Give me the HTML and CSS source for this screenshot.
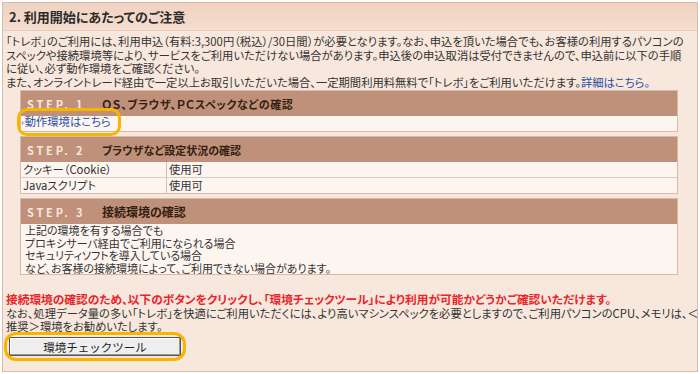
FILE: index.html
```html
<!DOCTYPE html>
<html lang="ja">
<head>
<meta charset="utf-8">
<link rel="stylesheet" href="styles.css">
</head>
<body>
<div class="box">
  <div class="box-head">2. 利用開始にあたってのご注意</div>
  <div class="box-body">
    <p class="intro">「トレボ」のご利用には、利用申込（有料:3,300円（税込）/30日間）が必要となります。なお、申込を頂いた場合でも、お客様の利用するパソコンの<br>スペックや接続環境等により、サービスをご利用いただけない場合があります。申込後の申込取消は受付できませんので、申込前に以下の手順<br>に従い、必ず動作環境をご確認ください。<br>また、オンライントレード経由で一定以上お取引いただいた場合、一定期間利用料無料で「トレボ」をご利用いただけます。<a class="link" href="#">詳細はこちら。</a></p>

    <div class="steps">
      <div class="step">
        <div class="step-head"><span class="step-num">STEP. 1</span><span class="step-title wide">ＯＳ、ブラウザ、ＰＣスペックなどの確認</span></div>
        <div class="step-row"><a class="link arrow hl" href="#">動作環境はこちら</a></div>
      </div>
      <div class="step">
        <div class="step-head"><span class="step-num">STEP. 2</span><span class="step-title">ブラウザなど設定状況の確認</span></div>
        <div class="step-table">
          <div class="cell key">クッキー（Cookie）</div><div class="cell">使用可</div>
          <div class="cell key">Javaスクリプト</div><div class="cell">使用可</div>
        </div>
      </div>
      <div class="step">
        <div class="step-head"><span class="step-num">STEP. 3</span><span class="step-title big">接続環境の確認</span></div>
        <div class="step-text">上記の環境を有する場合でも<br>プロキシサーバ経由でご利用になられる場合<br>セキュリティソフトを導入している場合<br>など、お客様の接続環境によって、ご利用できない場合があります。</div>
      </div>
    </div>

    <p class="alert">接続環境の確認のため、以下のボタンをクリックし、「環境チェックツール」により利用が可能かどうかご確認いただけます。</p>
    <p class="note">なお、処理データ量の多い「トレボ」を快適にご利用いただくには、より高いマシンスペックを必要としますので、ご利用パソコンのCPU、メモリは、＜<br>推奨＞環境をお勧めいたします。</p>
    <div class="btn-wrap hl"><button class="btn" type="button">環境チェックツール</button></div>
  </div>
</div>
</body>
</html>
```

FILE: styles.css
```css
html, body {
  margin: 0;
  padding: 0;
  background: #ffffff;
}
body {
  font-family: "Noto Sans CJK JP", "Noto Sans", sans-serif;
  font-size: 11.3px;
  color: #333333;
  font-feature-settings: "palt";
}
.box {
  margin: 2px 2px 0 2px;
  height: 370px;
  box-sizing: border-box;
  border: 1px solid #d6bcab;
  background: #f7e7dc;
  overflow: hidden;
}
.box-head {
  height: 27px;
  line-height: 27px;
  padding-left: 6px;
  font-size: 13px;
  font-weight: bold;
  color: #2b2b2b;
  background: linear-gradient(#f0d2c0, #f5ddd0);
  border-bottom: 1px solid #e6c9b7;
}
.box-body {
  padding: 4px 4px 0 3px;
}
.intro {
  margin: 0;
  line-height: 13.5px;
  white-space: nowrap;
}
.link {
  color: #2a4fa3;
  text-decoration: none;
}
.steps {
  margin: 1px 15px 0 14px;
}
.step {
  border: 1px solid #d9b9a7;
  background: #fdf5ef;
  margin-bottom: 4px;
}
.step-head {
  height: 25px;
  display: flex;
  align-items: center;
  background: #bf917a;
  padding-left: 6px;
}
.step-num {
  width: 75px;
  color: #f8e6d8;
  font-size: 11px;
  font-weight: bold;
  letter-spacing: 2.8px;
}
.step-title {
  color: #33200f;
  font-size: 11px;
  font-weight: bold;
}
.step-title.wide {
  letter-spacing: 0.6px;
}
.step-title.big {
  font-size: 12px;
}
.step-row {
  height: 15px;
  line-height: 15px;
}
.arrow::before {
  content: "›";
  font-size: 9px;
  margin-right: 1px;
}
.hl {
  outline: 3px solid #f7b500;
  outline-offset: 1px;
  border-radius: 6px;
}
.step-row .hl {
  display: inline-block;
  padding: 2px 6px 2px 0;
  margin-top: -4px;
  line-height: 15px;
  vertical-align: top;
}
.step-table {
  display: grid;
  grid-template-columns: 146px 1fr;
}
.cell {
  height: 15px;
  line-height: 15px;
  padding-left: 2px;
  border-top: 1px solid #e2cbbd;
}
.cell.key {
  border-right: 1px solid #d9bfae;
}
.step-table .cell:nth-child(-n+2) {
  border-top: none;
}
.step-text {
  padding: 0 4px;
  font-size: 11px;
  line-height: 12.5px;
}
.alert {
  margin: 17px 0 0 0;
  color: #e8262b;
  font-size: 11.7px;
  font-weight: bold;
  line-height: 14px;
}
.note {
  margin: 1px 0 0 0;
  line-height: 13px;
  white-space: nowrap;
}
.btn-wrap {
  display: inline-block;
  margin: 3px 0 0 2px;
  padding: 1px;
  border-radius: 8px;
}
.btn {
  display: block;
  width: 172px;
  height: 19px;
  font-family: inherit;
  font-size: 11.5px;
  color: #222;
  background: #eeeeee;
  border: 1px solid #555;
  padding: 0;
  box-shadow: inset -1px -1px 0 #999, inset 1px 1px 0 #fff;
}
```
